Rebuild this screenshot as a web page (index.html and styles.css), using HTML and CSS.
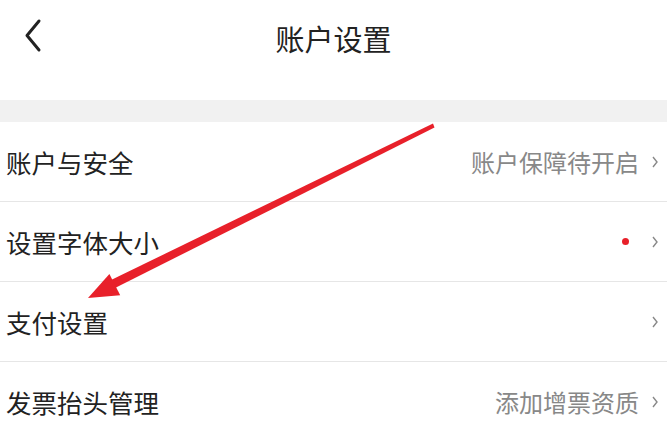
FILE: index.html
```html
<!DOCTYPE html>
<html lang="zh-CN">
<head>
    <meta charset="UTF-8">
    <meta name="viewport" content="width=device-width, initial-scale=1.0">
    <title>账户设置</title>
    <link rel="stylesheet" href="styles.css">
</head>
<body>
    <div class="page">
        <div class="header">
            <div class="nav">
                <span class="back">
                    <svg width="24" height="36" viewBox="0 0 24 36"><path d="M17 3 L5 17.5 L17 32" fill="none" stroke="#222" stroke-width="3" stroke-linecap="round" stroke-linejoin="round"/></svg>
                </span>
                <span class="title">账户设置</span>
            </div>
        </div>

        <div class="gap"></div>

        <div class="list">
            <div class="row">
                <span class="label">账户与安全</span>
                <span class="extra">账户保障待开启</span>
                <span class="arrow"><svg width="8" height="14" viewBox="0 0 8 14"><path d="M2 2 L6 7 L2 12" fill="none" stroke="#888" stroke-width="1.4"/></svg></span>
            </div>
            <div class="row">
                <span class="label">设置字体大小</span>
                <span class="dot"></span>
                <span class="arrow"><svg width="8" height="14" viewBox="0 0 8 14"><path d="M2 2 L6 7 L2 12" fill="none" stroke="#888" stroke-width="1.4"/></svg></span>
            </div>
            <div class="row">
                <span class="label">支付设置</span>
                <span class="arrow"><svg width="8" height="14" viewBox="0 0 8 14"><path d="M2 2 L6 7 L2 12" fill="none" stroke="#888" stroke-width="1.4"/></svg></span>
            </div>
            <div class="row">
                <span class="label">发票抬头管理</span>
                <span class="extra">添加增票资质</span>
                <span class="arrow"><svg width="8" height="14" viewBox="0 0 8 14"><path d="M2 2 L6 7 L2 12" fill="none" stroke="#888" stroke-width="1.4"/></svg></span>
            </div>
        </div>

        <!-- 标注箭头 -->
        <svg class="pointer" width="667" height="433" viewBox="0 0 667 433">
            <polygon points="433,123.5 434.5,127.5 113,289 109,281" fill="#e8202a"/>
            <polygon points="88,298 109.4,273.9 120.2,295.3" fill="#e8202a"/>
        </svg>
    </div>
</body>
</html>
```

FILE: styles.css
```css
body {
    margin: 0;
    padding: 0;
    background: #fff;
    font-family: "Noto Sans CJK SC", "Noto Sans", sans-serif;
    color: #222;
    overflow: hidden;
}

.page {
    position: relative;
    width: 667px;
    height: 433px;
    overflow: hidden;
}

.header {
    height: 100px;
    background: #fff;
}

.nav {
    height: 76px;
    display: flex;
    align-items: center;
    justify-content: center;
    position: relative;
}

.back {
    position: absolute;
    left: 22px;
    top: 18px;
    display: flex;
}

.title {
    font-size: 29px;
    color: #222;
}

.gap {
    height: 22px;
    background: #f1f1f1;
}

.list {
    background: #fff;
}

.row {
    height: 79px;
    border-bottom: 1px solid #e6e6e6;
    display: flex;
    align-items: center;
    padding: 0 8px 0 6px;
}

.label {
    flex: 1;
    font-size: 25.5px;
    color: #222;
}

.extra {
    font-size: 24px;
    color: #888;
    margin-right: 12px;
}

.dot {
    width: 7px;
    height: 7px;
    border-radius: 50%;
    background: #e8202a;
    margin-right: 22px;
}

.arrow {
    display: flex;
    width: 8px;
}

.pointer {
    position: absolute;
    left: 0;
    top: 0;
}
```
